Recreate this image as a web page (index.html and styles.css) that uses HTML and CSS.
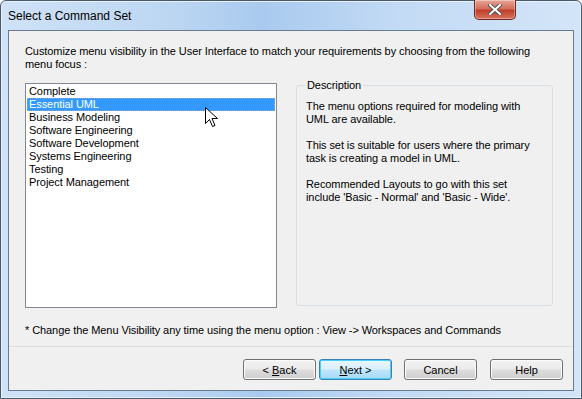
FILE: index.html
```html
<!DOCTYPE html>
<html lang="en">
<head>
  <meta charset="UTF-8">
  <title>Select a Command Set</title>
  <link rel="stylesheet" href="styles.css">
</head>
<body>

  <div class="window">
    <div class="titlebar">
      <span class="title">Select a Command Set</span>
      <button class="close" aria-label="Close">
        <svg width="14" height="11" viewBox="0 0 14 11">
          <path d="M2 1 L12 10 M12 1 L2 10" stroke="#555" stroke-width="4" stroke-linecap="square"/>
          <path d="M2 1 L12 10 M12 1 L2 10" stroke="#fff" stroke-width="2" stroke-linecap="square"/>
        </svg>
      </button>
    </div>

    <div class="client">
      <p class="intro">Customize menu visibility in the User Interface to match your requirements by choosing from the following menu focus :</p>

      <div class="panes">
        <ul class="listbox">
          <li>Complete</li>
          <li class="selected">Essential UML</li>
          <li>Business Modeling</li>
          <li>Software Engineering</li>
          <li>Software Development</li>
          <li>Systems Engineering</li>
          <li>Testing</li>
          <li>Project Management</li>
        </ul>

        <fieldset class="group">
          <legend>Description</legend>
          <p>The menu options required for modeling with UML are available.</p>
          <p>This set is suitable for users where the primary task is creating a model in UML.</p>
          <p>Recommended Layouts to go with this set include 'Basic - Normal' and 'Basic - Wide'.</p>
        </fieldset>
      </div>

      <p class="note">* Change the Menu Visibility any time using the menu option : View -&gt; Workspaces and Commands</p>

      <div class="buttons">
        <button class="btn">&lt; <u>B</u>ack</button>
        <button class="btn default"><u>N</u>ext &gt;</button>
        <button class="btn cancel">Cancel</button>
        <button class="btn help">Help</button>
      </div>
    </div>

    <svg class="cursor" width="14" height="22" viewBox="0 0 14 22">
      <path d="M0.5 0.5 L0.5 16.5 L4.5 12.5 L7.5 19.5 L10 18.5 L7 11.5 L12.5 11.5 Z" fill="#fff" stroke="#000" stroke-width="1"/>
    </svg>
  </div>

</body>
</html>
```

FILE: styles.css
```css
* {
  box-sizing: border-box;
}
body {
  margin: 0;
  font-family: 'Liberation Sans', Arial, sans-serif;
  font-size: 11px;
  letter-spacing: -0.08px;
  color: #000;
  background: #fff;
}
.window {
  position: relative;
  width: 582px;
  height: 399px;
  border: 1px solid #4a5a6a;
  border-radius: 6px 6px 0 0;
  background: linear-gradient(90deg, #cfe2f7 0%, #bcd6f2 30%, #a9caef 45%, #c4dbf5 70%, #d3e5f8 100%);
  padding: 0 7px 7px;
  display: flex;
  flex-direction: column;
  box-shadow: inset 0 0 0 1px #e8f1fb;
}
.titlebar {
  height: 29px;
  display: flex;
  align-items: flex-start;
  justify-content: space-between;
}
.title {
  font-size: 12px;
  letter-spacing: 0;
  margin-top: 8px;
  color: #000;
}
.close {
  width: 42px;
  height: 20px;
  margin-right: 58px;
  margin-top: -1px;
  border: 1px solid #6d2a22;
  border-top: none;
  border-radius: 0 0 5px 5px;
  background: linear-gradient(#e8a595 0%, #d46f5c 45%, #c1402a 55%, #d8725e 100%);
  display: flex;
  align-items: center;
  justify-content: center;
  padding: 0;
  box-shadow: inset 0 0 0 1px rgba(255, 255, 255, 0.35);
}
.client {
  flex: 1;
  background: #f0f0f0;
  border: 1px solid #687c90;
  padding: 14px 10px 0 16px;
  display: flex;
  flex-direction: column;
}
.intro {
  margin: 0;
  line-height: 13px;
  width: 520px;
}
.panes {
  display: flex;
  margin-top: 12px;
  height: 225px;
}
.listbox {
  list-style: none;
  margin: 0;
  width: 252px;
  height: 225px;
  background: #fff;
  border: 1px solid #828790;
  padding: 1px;
}
.listbox li {
  height: 13px;
  line-height: 13px;
  padding-left: 2px;
}
.listbox li.selected {
  background: #3399ff;
  color: #fff;
  outline: 1px dotted #8aa6c8;
  outline-offset: -1px;
}
.group {
  margin: -4px 0 0 19px;
  width: 257px;
  height: 227px;
  border: 1px solid #d5dfe5;
  border-radius: 3px;
  padding: 9px 10px 0 9px;
}
.group legend {
  padding: 0 2px;
  margin-left: -1px;
}
.group p {
  margin: 0 0 13px;
  line-height: 13px;
}
.note {
  margin: 16px 0 0;
  line-height: 13px;
}
.buttons {
  margin: 9px -10px 0 -16px;
  border-top: 1px solid #dcdcdc;
  padding: 12px 10px 0 0;
  display: flex;
  justify-content: flex-end;
  gap: 3px;
}
.btn {
  width: 73px;
  height: 21px;
  font-family: inherit;
  font-size: 11px;
  border: 1px solid #707070;
  border-radius: 3px;
  background: linear-gradient(#f2f2f2 0%, #ebebeb 48%, #dddddd 52%, #cfcfcf 100%);
  box-shadow: inset 0 0 0 1px #fcfcfc;
  padding: 0;
}
.btn.default {
  border-color: #3c7fb1;
  background: linear-gradient(#eaf6fd 0%, #d9f0fc 48%, #bee6fd 52%, #a7d9f5 100%);
  box-shadow: inset 0 0 0 1px #48d0f7;
}
.btn.cancel {
  margin-left: 9px;
}
.btn.help {
  margin-left: 10px;
}
.cursor {
  position: absolute;
  left: 204px;
  top: 106px;
}
```
